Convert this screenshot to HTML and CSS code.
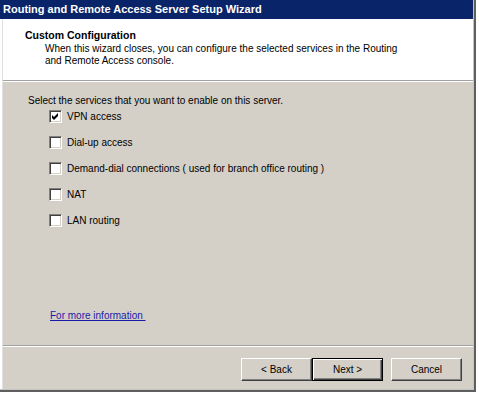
FILE: index.html
```html
<!DOCTYPE html>
<html lang="en">
<head>
    <meta charset="UTF-8">
    <title>Routing and Remote Access Server Setup Wizard</title>
    <link rel="stylesheet" href="styles.css">
</head>
<body>
    <div class="window">
        <div class="window-inner">
            <div class="titlebar">Routing and Remote Access Server Setup Wizard</div>

            <div class="frame">
                <div class="page">
                    <div class="page-header">
                        <h1>Custom Configuration</h1>
                        <p>When this wizard closes, you can configure the selected services in the Routing<br>and Remote Access console.</p>
                    </div>

                    <div class="page-body">
                        <p class="intro">Select the services that you want to enable on this server.</p>

                        <ul class="options">
                            <li class="option">
                                <span class="checkbox">
                                    <svg width="11" height="11" viewBox="0 0 11 11"><polygon points="2,4 4,6 8,2 8,5 4,9 2,7" fill="#000"/></svg>
                                </span>
                                <span class="option-label">VPN access</span>
                            </li>
                            <li class="option">
                                <span class="checkbox"></span>
                                <span class="option-label">Dial-up access</span>
                            </li>
                            <li class="option">
                                <span class="checkbox"></span>
                                <span class="option-label">Demand-dial connections ( used for branch office routing )</span>
                            </li>
                            <li class="option">
                                <span class="checkbox"></span>
                                <span class="option-label">NAT</span>
                            </li>
                            <li class="option">
                                <span class="checkbox"></span>
                                <span class="option-label">LAN routing</span>
                            </li>
                        </ul>

                        <a href="#" class="more-info">For more information&nbsp;</a>
                    </div>

                    <div class="page-footer">
                        <button type="button" class="btn">&lt; Back</button>
                        <button type="button" class="btn btn-default">Next &gt;</button>
                        <button type="button" class="btn btn-cancel">Cancel</button>
                    </div>
                </div>
            </div>
        </div>
    </div>
</body>
</html>
```

FILE: styles.css
```css
* {
    margin: 0;
    padding: 0;
    box-sizing: border-box;
}

body {
    background: #fff;
    font-family: 'Liberation Sans', Arial, sans-serif;
    font-size: 10px;
    color: #000;
}

.window {
    width: 476px;
    height: 392px;
    border-right: 2px solid #5f5f5f;
    border-bottom: 2px solid #5f5f5f;
}

.window-inner {
    height: 100%;
    display: flex;
    flex-direction: column;
    border-right: 1px solid #c4c4c4;
    border-bottom: 1px solid #c4c4c4;
}

.titlebar {
    height: 19px;
    line-height: 19px;
    padding-left: 3px;
    background: #0a246a;
    color: #fff;
    font-size: 11px;
    font-weight: bold;
    white-space: nowrap;
}

.frame {
    flex: 1;
    display: flex;
    border-left: 2px solid #fff;
}

.page {
    flex: 1;
    display: flex;
    flex-direction: column;
    border-left: 1px solid #e0e0e0;
    background: #d4d0c8;
}

.page-header {
    height: 62px;
    padding: 10px 0 0 22px;
    background: #fff;
    border-bottom: 1px solid #a0a0a0;
}

.page-header h1 {
    font-size: 10.5px;
    line-height: 13px;
    font-weight: bold;
}

.page-header p {
    margin-top: 1px;
    padding-left: 20px;
    line-height: 12px;
}

.page-body {
    flex: 1;
    display: flex;
    flex-direction: column;
    padding: 13px 0 23px 25px;
    border-top: 1px solid #fff;
    border-bottom: 1px solid #a0a0a0;
}

.intro {
    line-height: 12px;
}

.options {
    list-style: none;
    display: flex;
    flex-direction: column;
    gap: 13px;
    margin-top: 3px;
    padding-left: 21px;
}

.option {
    display: flex;
    align-items: center;
    gap: 5px;
    height: 13px;
    white-space: nowrap;
}

.checkbox {
    width: 13px;
    height: 13px;
    flex: none;
    background: #fff;
    border: 1px solid;
    border-color: #808080 #fff #fff #808080;
    box-shadow: inset 1px 1px #404040, inset -1px -1px #d4d0c8;
}

.checkbox svg {
    display: block;
}

.more-info {
    margin-top: auto;
    margin-left: 22px;
    align-self: flex-start;
    line-height: 12px;
    color: #1a1aa8;
    text-decoration: underline;
}

.page-footer {
    height: 43px;
    display: flex;
    justify-content: flex-end;
    align-items: flex-start;
    padding: 11px 11px 0 0;
    border-top: 1px solid #fff;
}

.btn {
    width: 71px;
    height: 23px;
    background: #d4d0c8;
    font-family: 'Liberation Sans', Arial, sans-serif;
    font-size: 10px;
    color: #000;
    border: 1px solid;
    border-color: #fff #404040 #404040 #fff;
    box-shadow: inset -1px -1px #808080;
}

.btn-default {
    border-color: #000;
    box-shadow: inset 1px 1px #fff, inset -1px -1px #404040, inset -2px -2px #808080;
}

.btn-cancel {
    margin-left: 8px;
}
```
